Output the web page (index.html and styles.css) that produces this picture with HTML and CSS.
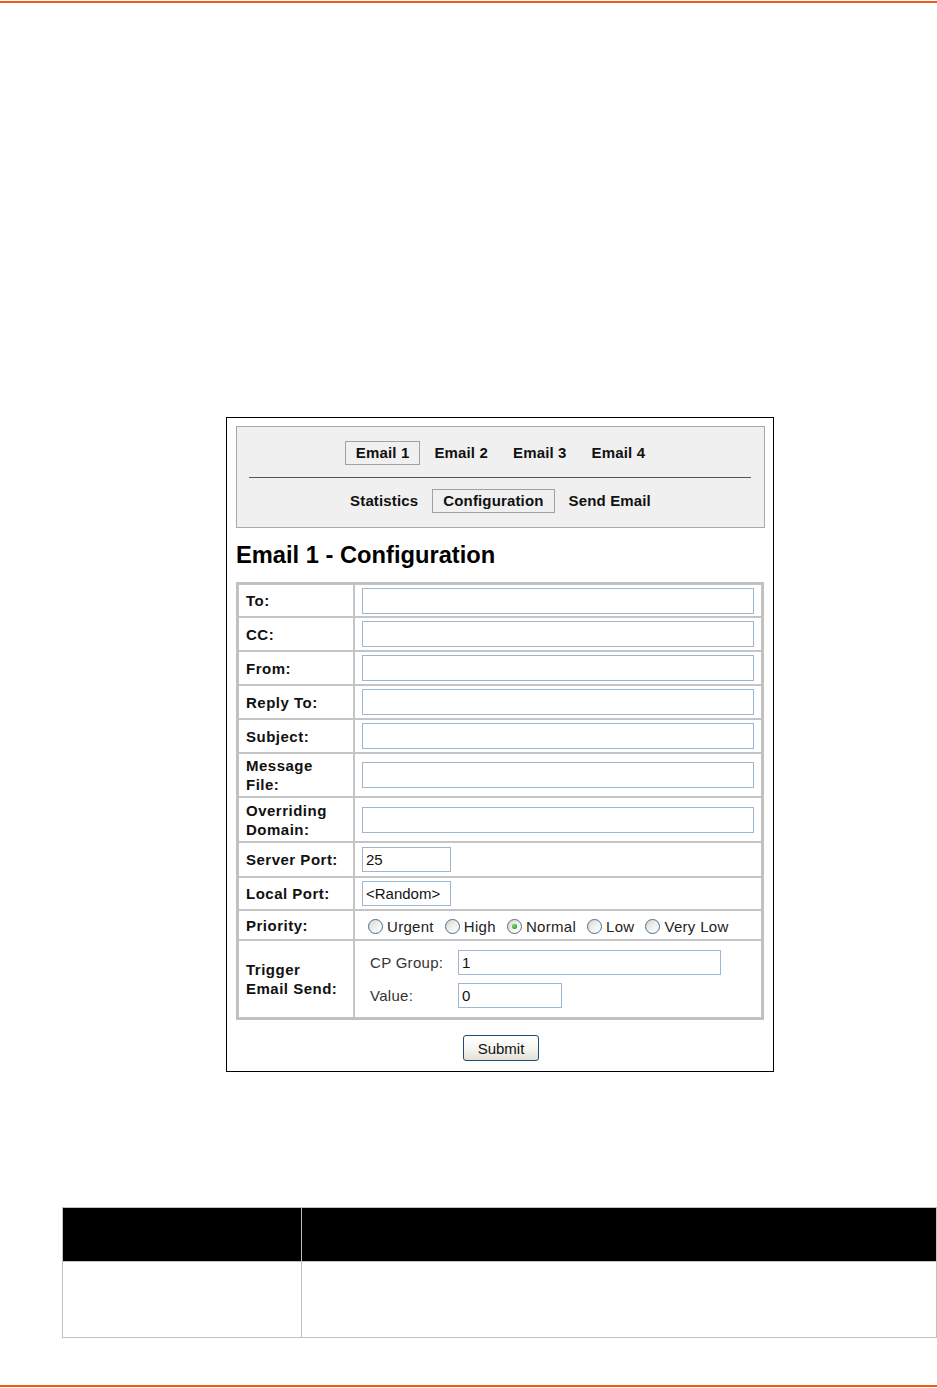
FILE: index.html
```html
<!DOCTYPE html>
<html lang="en">
<head>
<meta charset="utf-8">
<title>Email 1 - Configuration</title>
<link rel="stylesheet" href="styles.css">
</head>
<body>
<div class="rule rule-top"></div>
<main class="page">
  <div class="figure">
    <div class="nav">
      <div class="tabs">
        <span class="tab active">Email 1</span>
        <span class="tab">Email 2</span>
        <span class="tab">Email 3</span>
        <span class="tab">Email 4</span>
      </div>
      <div class="divider"></div>
      <div class="tabs">
        <span class="tab">Statistics</span>
        <span class="tab active">Configuration</span>
        <span class="tab">Send Email</span>
      </div>
    </div>
    <h1 class="title">Email 1 - Configuration</h1>
    <table class="cfg">
      <tr class="r33"><td class="lbl">To:</td><td class="val"><input class="txt wide" type="text" value=""></td></tr>
      <tr class="r34"><td class="lbl">CC:</td><td class="val"><input class="txt wide" type="text" value=""></td></tr>
      <tr class="r34"><td class="lbl">From:</td><td class="val"><input class="txt wide" type="text" value=""></td></tr>
      <tr class="r34"><td class="lbl">Reply To:</td><td class="val"><input class="txt wide" type="text" value=""></td></tr>
      <tr class="r34"><td class="lbl">Subject:</td><td class="val"><input class="txt wide" type="text" value=""></td></tr>
      <tr class="r44"><td class="lbl">Message<br>File:</td><td class="val"><input class="txt wide" type="text" value=""></td></tr>
      <tr class="r45"><td class="lbl">Overriding<br>Domain:</td><td class="val"><input class="txt wide" type="text" value=""></td></tr>
      <tr class="r35"><td class="lbl">Server Port:</td><td class="val"><input class="txt port" type="text" value="25"></td></tr>
      <tr class="r33"><td class="lbl">Local Port:</td><td class="val"><input class="txt port" type="text" value="&lt;Random&gt;"></td></tr>
      <tr class="r30"><td class="lbl">Priority:</td><td class="val">
        <div class="radios">
          <span class="opt"><span class="radio"></span>Urgent</span>
          <span class="opt"><span class="radio"></span>High</span>
          <span class="opt"><span class="radio checked"></span>Normal</span>
          <span class="opt"><span class="radio"></span>Low</span>
          <span class="opt"><span class="radio"></span>Very Low</span>
        </div>
      </td></tr>
      <tr class="r78"><td class="lbl">Trigger<br>Email Send:</td><td class="val">
        <div class="trigger">
          <span class="tlabel">CP Group:</span><input class="txt cp" type="text" value="1">
          <span class="tlabel">Value:</span><input class="txt vv" type="text" value="0">
        </div>
      </td></tr>
    </table>
    <div class="actions"><button class="submit" type="button">Submit</button></div>
  </div>
  <table class="desc">
    <tr class="desc-head"><th class="d1"></th><th class="d2"></th></tr>
    <tr class="desc-body"><td class="d1"></td><td class="d2"></td></tr>
  </table>
</main>
<div class="rule rule-bottom"></div>
</body>
</html>
```
FILE: styles.css
```css
html, body {
  margin: 0;
  padding: 0;
  background: #ffffff;
}
body {
  font-family: "Liberation Sans", Arial, sans-serif;
  color: #000;
  width: 937px;
  height: 1388px;
  overflow: hidden;
}
.rule {
  height: 2px;
  background: #f45b10;
}
.rule-top {
  margin-top: 1px;
}
.rule-bottom {
  margin-top: 47px;
}
.page {
  padding-top: 414px;
}
.figure {
  margin-left: 226px;
  width: 548px;
  box-sizing: border-box;
  border: 1px solid #000;
  padding: 8px 8px 10px 9px;
}
.nav {
  width: 529px;
  height: 102px;
  box-sizing: border-box;
  border: 1px solid #a8a8a8;
  background: #f0f0f0;
  padding-top: 14px;
}
.tabs {
  display: flex;
  justify-content: center;
  gap: 3px;
}
.tab {
  height: 24px;
  box-sizing: border-box;
  border: 1px solid transparent;
  padding: 0 10px;
  font-size: 15px;
  font-weight: bold;
  letter-spacing: 0.15px;
  line-height: 22px;
  color: #111;
  white-space: nowrap;
}
.tab.active {
  border-color: #a0a0a0;
}
.divider {
  height: 1px;
  background: #555;
  margin: 12px 13px 11px 12px;
}
.title {
  margin: 13px 0 13px 0;
  font-size: 23.7px;
  line-height: 28px;
  font-weight: bold;
  color: #000;
}
.cfg {
  border-collapse: separate;
  border-spacing: 0;
  border: 2px solid #c0c0c0;
  width: 528px;
  table-layout: fixed;
}
.cfg td {
  border: 1px solid #c4c4c4;
  padding-top: 0;
  padding-bottom: 0;
  vertical-align: middle;
}
.cfg td.lbl {
  width: 103px;
  padding-left: 7px;
  padding-right: 4px;
  font-size: 15px;
  font-weight: bold;
  letter-spacing: 0.5px;
  line-height: 19px;
  color: #111;
}
.cfg td.val {
  padding-left: 7px;
  padding-right: 5px;
}
.r30 td { height: 28px; }
.r33 td { height: 31px; }
.r34 td { height: 32px; }
.r35 td { height: 33px; }
.r44 td { height: 42px; }
.r45 td { height: 43px; }
.r78 td { height: 76px; }
.txt {
  display: block;
  box-sizing: border-box;
  height: 26px;
  border: 1px solid #9fb6cf;
  padding: 0 3px;
  margin: 0;
  font-family: "Liberation Sans", Arial, sans-serif;
  font-size: 15px;
  color: #111;
  background: #fff;
  outline: none;
}
.wide {
  width: 392px;
}
.port {
  width: 89px;
  height: 25px;
}
.radios {
  display: flex;
  align-items: center;
  padding-left: 6px;
  padding-top: 2px;
  font-size: 15px;
  letter-spacing: 0.3px;
  color: #222;
}
.opt {
  display: inline-flex;
  align-items: center;
  margin-right: 11px;
  white-space: nowrap;
}
.radio {
  position: relative;
  width: 13px;
  height: 13px;
  border: 1px solid #4b6b92;
  border-radius: 50%;
  background: linear-gradient(135deg, #d8d8d2 0%, #f4f4f0 60%, #ffffff 100%);
  margin-right: 4px;
  flex: none;
}
.radio.checked::after {
  content: "";
  position: absolute;
  left: 4px;
  top: 4px;
  width: 5px;
  height: 5px;
  border-radius: 50%;
  background: radial-gradient(circle at 40% 40%, #7fe07f 0%, #21a121 70%);
}
.trigger {
  display: grid;
  grid-template-columns: 88px auto;
  row-gap: 8px;
  align-items: center;
  padding-left: 8px;
  font-size: 15px;
  letter-spacing: 0.3px;
  color: #333;
}
.tlabel {
  white-space: nowrap;
}
.cp {
  width: 263px;
  height: 25px;
}
.vv {
  width: 104px;
  height: 25px;
}
.actions {
  display: flex;
  justify-content: center;
  margin-top: 15px;
}
.submit {
  width: 76px;
  height: 26px;
  box-sizing: border-box;
  border: 1px solid #1f4a7a;
  border-radius: 3px;
  background: linear-gradient(#ffffff 0%, #f6f6f1 50%, #e3e0d6 100%);
  font-family: "Liberation Sans", Arial, sans-serif;
  font-size: 15px;
  color: #111;
  padding: 0;
  margin-left: 1px;
}
.desc {
  margin-top: 135px;
  margin-left: 62px;
  width: 875px;
  border-collapse: collapse;
  table-layout: fixed;
  border: 1px solid #c0c0c0;
}
.desc th, .desc td {
  border: 1px solid #c0c0c0;
  padding: 0;
}
.desc .d1 {
  width: 238px;
}
.desc-head th {
  background: #000;
  height: 53px;
  border-color: #c0c0c0;
}
.desc-body td {
  height: 75px;
  background: #fff;
}
```
